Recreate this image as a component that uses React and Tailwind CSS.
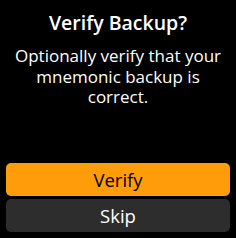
export default function App() {
  return (
    <div className="w-[236px] h-[238px] bg-black flex flex-col text-white">
      <div className="flex flex-col items-center pt-[10px] px-[12px] font-['Open_Sans',sans-serif]">
        <h1 className="text-[19.5px] leading-[26px] font-semibold text-center">Verify Backup?</h1>
        <p className="mt-[10px] text-[17px] leading-[20.5px] text-center">
          Optionally verify that your mnemonic backup is correct.
        </p>
      </div>
      <div className="mt-auto flex flex-col gap-[3px] px-[6px] pb-[6px] font-['Open_Sans',sans-serif]">
        <button className="h-[33px] rounded-[5px] bg-[#ff9c0a] text-black text-[18.5px] font-medium">Verify</button>
        <button className="h-[33px] rounded-[5px] bg-[#2d2d2d] text-white text-[18.5px] font-medium">Skip</button>
      </div>
    </div>
  );
}
